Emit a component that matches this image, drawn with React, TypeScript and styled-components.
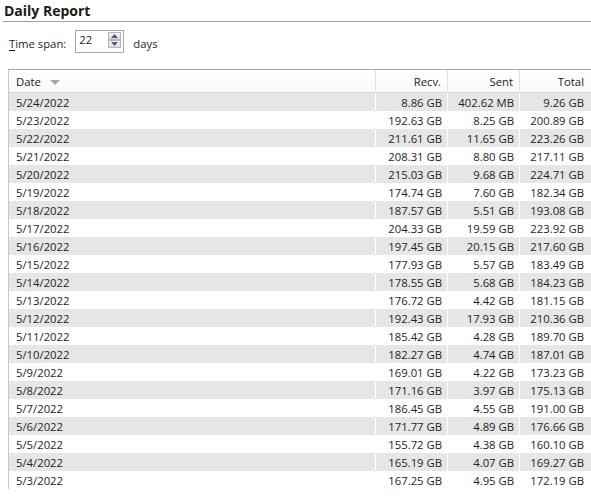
import React from "react";
import styled, { createGlobalStyle } from "styled-components";

const Global = createGlobalStyle`
  html, body { margin: 0; padding: 0; background: #fff; }
  body { font-family: "Open Sans", "Noto Sans", sans-serif; font-size: 11.3px; color: #1e1e1e; overflow: hidden; }
`;

const Page = styled.div`
  width: 591px;
  height: 498px;
  overflow: hidden;
  display: flex;
  flex-direction: column;
`;

const Title = styled.div`
  margin: 2px 0 0 4px;
  font-size: 14px;
  font-weight: 700;
  line-height: 18px;
  color: #1a1a1a;
`;

const Rule = styled.div`
  margin: 1px 0 0 3px;
  height: 1px;
  background: #a0a0a0;
`;

const SpanRow = styled.div`
  display: flex;
  align-items: flex-start;
  margin: 8px 0 0 9px;
  height: 23px;
`;

const Label = styled.span`
  line-height: 16px;
  margin-top: 6px;
  u { text-decoration: underline; text-underline-offset: 2px; }
`;

const Spinner = styled.div`
  margin-left: 9px;
  width: 49px;
  height: 23px;
  border: 1px solid #a9a9a9;
  box-sizing: border-box;
  display: flex;
  align-items: flex-start;
  padding: 1px 0 0 3px;
  background: #fff;
`;

const SpinText = styled.span`
  flex: 1;
  line-height: 16px;
`;

const SpinButtons = styled.div`
  display: flex;
  flex-direction: column;
  width: 13px;
  margin-right: 2px;
  gap: 0;
`;

const SpinButton = styled.div`
  height: 8px;
  box-sizing: border-box;
  border: 1px solid #b5b5b5;
  background: linear-gradient(#f6f6f6, #dcdcdc);
  display: flex;
  align-items: center;
  justify-content: center;
`;

const Days = styled.span`
  margin-left: 9px;
  margin-top: 6px;
  line-height: 16px;
`;

const Table = styled.div`
  margin: 16px 0 0 8px;
  border-top: 1px solid #a8a8a8;
  border-left: 1px solid #c8c8c8;
  display: grid;
  grid-template-columns: 367px 72px 72px 71px;
`;

const HeadCell = styled.div<{ $align?: "left" | "right"; $last?: boolean }>`
  height: 23px;
  border-bottom: 1px solid #d5d5d5;
  border-right: ${(p) => (p.$last ? "none" : "1px solid #e2e2e2")};
  background: linear-gradient(#ffffff, #f7f8f9);
  display: flex;
  align-items: center;
  justify-content: ${(p) => (p.$align === "right" ? "flex-end" : "flex-start")};
  padding: 1px ${(p) => (p.$last ? "7px" : "6px")} 0 7px;
  box-sizing: border-box;
  color: #1a1a1a;
`;

const SortArrow = styled.span`
  margin-left: 9px;
  width: 0;
  height: 0;
  border-left: 5px solid transparent;
  border-right: 5px solid transparent;
  border-top: 5px solid #a6a6a6;
  margin-top: 1px;
`;

const Cell = styled.div<{ $alt: boolean; $align?: "left" | "right"; $last?: boolean }>`
  height: 18px;
  background: ${(p) => (p.$alt ? "#e6e6e6" : "#ffffff")};
  border-right: ${(p) => (p.$last ? "none" : "1px solid #ffffff")};
  display: flex;
  align-items: center;
  justify-content: ${(p) => (p.$align === "right" ? "flex-end" : "flex-start")};
  padding: 0 ${(p) => (p.$last ? "7px" : "5px")} 0 7px;
  box-sizing: border-box;
  white-space: nowrap;
  color: #1e1e1e;
`;

const rows: [string, string, string, string][] = [
  ["5/24/2022", "8.86 GB", "402.62 MB", "9.26 GB"],
  ["5/23/2022", "192.63 GB", "8.25 GB", "200.89 GB"],
  ["5/22/2022", "211.61 GB", "11.65 GB", "223.26 GB"],
  ["5/21/2022", "208.31 GB", "8.80 GB", "217.11 GB"],
  ["5/20/2022", "215.03 GB", "9.68 GB", "224.71 GB"],
  ["5/19/2022", "174.74 GB", "7.60 GB", "182.34 GB"],
  ["5/18/2022", "187.57 GB", "5.51 GB", "193.08 GB"],
  ["5/17/2022", "204.33 GB", "19.59 GB", "223.92 GB"],
  ["5/16/2022", "197.45 GB", "20.15 GB", "217.60 GB"],
  ["5/15/2022", "177.93 GB", "5.57 GB", "183.49 GB"],
  ["5/14/2022", "178.55 GB", "5.68 GB", "184.23 GB"],
  ["5/13/2022", "176.72 GB", "4.42 GB", "181.15 GB"],
  ["5/12/2022", "192.43 GB", "17.93 GB", "210.36 GB"],
  ["5/11/2022", "185.42 GB", "4.28 GB", "189.70 GB"],
  ["5/10/2022", "182.27 GB", "4.74 GB", "187.01 GB"],
  ["5/9/2022", "169.01 GB", "4.22 GB", "173.23 GB"],
  ["5/8/2022", "171.16 GB", "3.97 GB", "175.13 GB"],
  ["5/7/2022", "186.45 GB", "4.55 GB", "191.00 GB"],
  ["5/6/2022", "171.77 GB", "4.89 GB", "176.66 GB"],
  ["5/5/2022", "155.72 GB", "4.38 GB", "160.10 GB"],
  ["5/4/2022", "165.19 GB", "4.07 GB", "169.27 GB"],
  ["5/3/2022", "167.25 GB", "4.95 GB", "172.19 GB"],
];

const Arrow = ({ up }: { up: boolean }) => (
  <svg width="7" height="4" viewBox="0 0 7 4">
    <path d={up ? "M0 4 L3.5 0 L7 4 Z" : "M0 0 L3.5 4 L7 0 Z"} fill="#4a5f7a" />
  </svg>
);

export default function App() {
  return (
    <Page>
      <Global />
      <Title>Daily Report</Title>
      <Rule />
      <SpanRow>
        <Label>
          <u>T</u>ime span:
        </Label>
        <Spinner>
          <SpinText>22</SpinText>
          <SpinButtons>
            <SpinButton>
              <Arrow up />
            </SpinButton>
            <SpinButton>
              <Arrow up={false} />
            </SpinButton>
          </SpinButtons>
        </Spinner>
        <Days>days</Days>
      </SpanRow>
      <Table>
        <HeadCell>
          Date
          <SortArrow />
        </HeadCell>
        <HeadCell $align="right">Recv.</HeadCell>
        <HeadCell $align="right">Sent</HeadCell>
        <HeadCell $align="right" $last>
          Total
        </HeadCell>
        {rows.map((r, i) => (
          <React.Fragment key={r[0]}>
            <Cell $alt={i % 2 === 0}>{r[0]}</Cell>
            <Cell $alt={i % 2 === 0} $align="right">
              {r[1]}
            </Cell>
            <Cell $alt={i % 2 === 0} $align="right">
              {r[2]}
            </Cell>
            <Cell $alt={i % 2 === 0} $align="right" $last>
              {r[3]}
            </Cell>
          </React.Fragment>
        ))}
      </Table>
    </Page>
  );
}
